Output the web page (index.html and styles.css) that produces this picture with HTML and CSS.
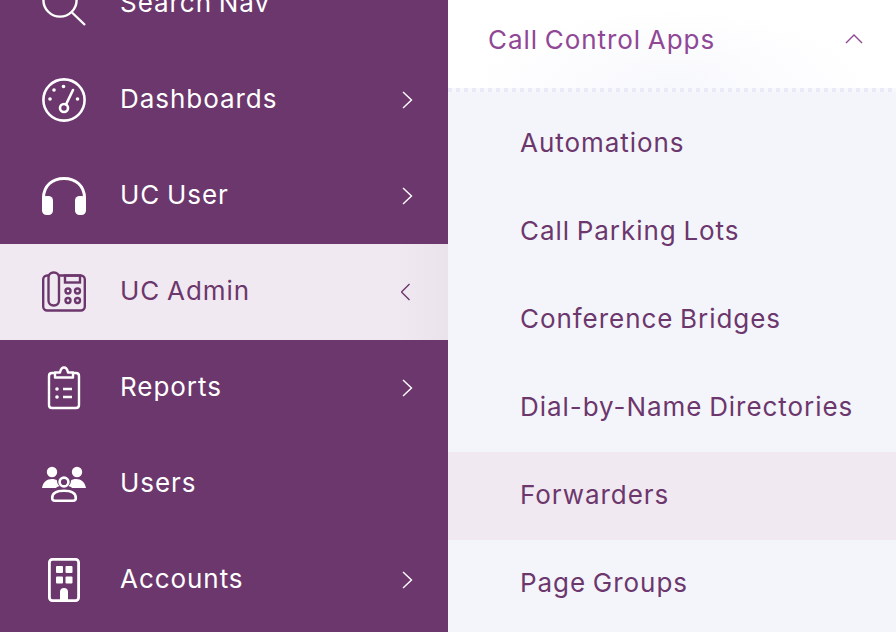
FILE: index.html
```html
<!DOCTYPE html>
<html lang="en">
<head>
  <meta charset="UTF-8">
  <title>UC Admin Nav</title>
  <link rel="stylesheet" href="styles.css">
</head>
<body>
  <div class="screen">
    <nav class="main-nav">
      <a class="nav-row">
        <svg class="nav-icon" viewBox="0 0 44 44"><circle cx="18" cy="18" r="16.6" fill="none" stroke="currentColor" stroke-width="2.4"/><path d="M30 30.5 L43 43" fill="none" stroke="currentColor" stroke-width="2.4"/></svg>
        <span class="nav-label">Search Nav</span>
      </a>
      <a class="nav-row">
        <svg class="nav-icon" viewBox="0 0 44 44"><g fill="none" stroke="currentColor" stroke-width="2.6"><circle cx="22" cy="22" r="20.6"/><circle cx="22" cy="30" r="4"/><path d="M24 26.5 L31 12" stroke-linecap="round"/></g><g fill="currentColor"><circle cx="21.5" cy="8.5" r="1.8"/><circle cx="12" cy="12" r="1.8"/><circle cx="8" cy="21" r="1.8"/><circle cx="35.5" cy="21" r="1.8"/></g></svg>
        <span class="nav-label">Dashboards</span>
        <svg class="chev" viewBox="0 0 12 18"><path d="M2 1 L10.5 9 L2 17"/></svg>
      </a>
      <a class="nav-row">
        <svg class="nav-icon" viewBox="0 0 44 44"><path d="M1.5 28 V24 C1.5 12 10 4.5 22 4.5 C34 4.5 42.5 12 42.5 24 V28" fill="none" stroke="currentColor" stroke-width="3"/><rect x="0" y="22" width="11" height="19" rx="4.5" fill="currentColor"/><rect x="33" y="22" width="11" height="19" rx="4.5" fill="currentColor"/></svg>
        <span class="nav-label">UC User</span>
        <svg class="chev" viewBox="0 0 12 18"><path d="M2 1 L10.5 9 L2 17"/></svg>
      </a>
      <a class="nav-row active">
        <svg class="nav-icon" viewBox="0 0 44 44"><g fill="none" stroke="currentColor" stroke-width="2.4"><rect x="1.2" y="5.5" width="41.6" height="35" rx="4"/><rect x="6.5" y="2.5" width="10.5" height="33" rx="5" fill="#f1e9f1"/><rect x="23" y="5.5" width="15" height="7"/><circle cx="26" cy="21" r="2.5"/><circle cx="35.5" cy="21" r="2.5"/><circle cx="26" cy="30.5" r="2.5"/><circle cx="35.5" cy="30.5" r="2.5"/></g></svg>
        <span class="nav-label">UC Admin</span>
        <svg class="chev" viewBox="0 0 12 18"><path d="M8.5 1 L0.5 9 L8.5 17"/></svg>
      </a>
      <a class="nav-row">
        <svg class="nav-icon" viewBox="0 0 44 44"><g fill="none" stroke="currentColor" stroke-width="2.4" stroke-linejoin="round"><path d="M13 7 H10 Q7 7 7 10 V39 Q7 42 10 42 H34 Q37 42 37 39 V10 Q37 7 34 7 H31"/><path d="M13 11.5 V6.5 H18 Q19 1.5 22 1.5 Q25 1.5 26 6.5 H31 V11.5 Z"/><path d="M21 23 H30 M21 31 H30"/></g><circle cx="15" cy="23" r="1.8" fill="currentColor"/><circle cx="15" cy="31" r="1.8" fill="currentColor"/></svg>
        <span class="nav-label">Reports</span>
        <svg class="chev" viewBox="0 0 12 18"><path d="M2 1 L10.5 9 L2 17"/></svg>
      </a>
      <a class="nav-row">
        <svg class="nav-icon" viewBox="0 0 44 44"><g fill="currentColor"><circle cx="10" cy="10" r="5.2"/><circle cx="35" cy="10" r="5.2"/><path d="M0 26 C1 20 5 17 10 17 C12 17 14 17.5 15 18.5 C15 21 16 23 17.5 24 C16 24.5 15 25 14 26 Z"/><path d="M44 26 C43 20 39 17 34 17 C32 17 30 17.5 29 18.5 C29 21 28 23 26.5 24 C28 24.5 29 25 30 26 Z"/></g><g fill="none" stroke="currentColor" stroke-width="2.6"><circle cx="22" cy="20" r="4.4"/><path d="M10.2 36 C10.2 31 15 28.8 22 28.8 C29 28.8 33.8 31 33.8 36 Q33.8 38.8 31 38.8 H13 Q10.2 38.8 10.2 36 Z"/></g></svg>
        <span class="nav-label">Users</span>
      </a>
      <a class="nav-row">
        <svg class="nav-icon" viewBox="0 0 44 44"><rect x="7.4" y="1.4" width="29.2" height="41.2" rx="3" fill="none" stroke="currentColor" stroke-width="2.8"/><g fill="currentColor"><rect x="14" y="8" width="7" height="7" rx="1"/><rect x="23.5" y="8" width="7" height="7" rx="1"/><rect x="14" y="18.5" width="7" height="7" rx="1"/><rect x="23.5" y="18.5" width="7" height="7" rx="1"/><path d="M18 43 V34 Q18 30 22 30 Q26 30 26 34 V43 Z"/></g></svg>
        <span class="nav-label">Accounts</span>
        <svg class="chev" viewBox="0 0 12 18"><path d="M2 1 L10.5 9 L2 17"/></svg>
      </a>
    </nav>
    <section class="sub-nav">
      <header class="sub-head">
        <span class="sub-title">Call Control Apps</span>
        <svg class="chev-up" viewBox="0 0 18 12"><path d="M1 10 L9 2 L17 10"/></svg>
      </header>
      <div class="dots"></div>
      <ul class="sub-list">
        <li class="sub-item">Automations</li>
        <li class="sub-item">Call Parking Lots</li>
        <li class="sub-item">Conference Bridges</li>
        <li class="sub-item">Dial-by-Name Directories</li>
        <li class="sub-item current">Forwarders</li>
        <li class="sub-item">Page Groups</li>
      </ul>
    </section>
  </div>
</body>
</html>
```

FILE: styles.css
```css
/* nav panels */
html, body {
  margin: 0;
  height: 100%;
  overflow: hidden;
}
body {
  font-family: Inter, "Liberation Sans", sans-serif;
  font-size: 26px;
  letter-spacing: 0.95px;
  word-spacing: -1.5px;
}
.screen {
  display: flex;
  width: 896px;
  height: 632px;
  overflow: hidden;
}
.main-nav {
  width: 448px;
  flex: none;
  height: 632px;
  background-color: #6c376c;
  color: #fff;
}
.nav-row {
  display: flex;
  align-items: center;
  height: 96px;
  padding: 0 35px 0 42px;
  box-sizing: border-box;
}
.nav-row:first-child {
  margin-top: -44px;
}
.nav-icon {
  width: 44px;
  height: 44px;
  flex: none;
  margin-right: 34px;
  overflow: visible;
}
.nav-label {
  flex: 1;
  padding-bottom: 3px;
}
.chev {
  width: 12px;
  height: 18px;
  flex: none;
  fill: none;
  stroke: currentColor;
  stroke-width: 1.4;
}
.active {
  background: linear-gradient(to right, #f1e9f1 88%, #ebe3eb);
  color: #6c376c;
}
.sub-nav {
  flex: 1;
  background-color: #f4f5fb;
}
.sub-head {
  display: flex;
  align-items: center;
  justify-content: space-between;
  height: 88px;
  padding: 0 33px 10px 40px;
  box-sizing: border-box;
  background: radial-gradient(ellipse 47% 90% at 50% 100%, #f7f8fc, #fff);
}
.dots {
  height: 4px;
  background: repeating-linear-gradient(to right, #e9eaf5 0 4px, #f8f8fc 4px 8px);
}
.sub-title {
  color: #8f4796;
}
.chev-up {
  width: 18px;
  height: 12px;
  fill: none;
  stroke: #8f4796;
  stroke-width: 1.4;
}
.sub-list {
  list-style: none;
  margin: 8px 0 0;
  padding: 0;
}
.sub-item {
  display: flex;
  align-items: center;
  height: 88px;
  padding: 0 0 3px 72px;
  box-sizing: border-box;
  color: #6c376c;
}
.current {
  background-color: #f1e9f1;
}
```
